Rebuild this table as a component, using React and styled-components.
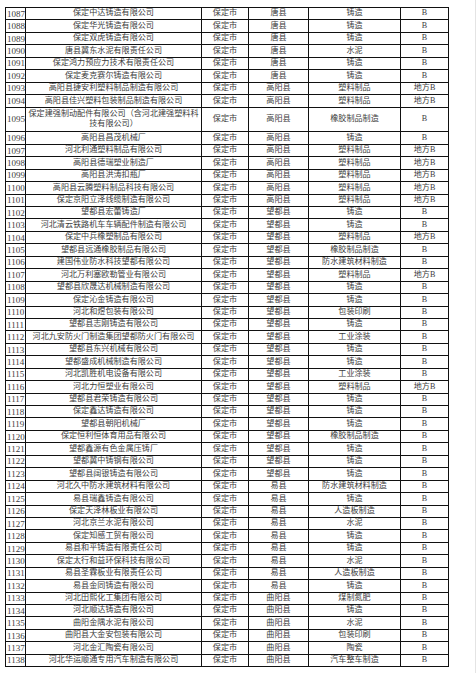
import React from "react";
import styled, { createGlobalStyle } from "styled-components";

const Global = createGlobalStyle`
  html, body { margin: 0; padding: 0; background: #fff; }
  body { font-family: "Liberation Serif", "Noto Sans CJK SC", serif; }
`;

const Page = styled.div`
  padding: 7px 0 0 5px;
  width: 476px;
  height: 673px;
  box-sizing: border-box;
  border-right: 1px solid #e4e4e4;
  overflow: hidden;
`;

const Table = styled.div`
  width: 444px;
  border-top: 1px solid #111;
  border-left: 1px solid #111;
  box-sizing: border-box;
`;

const Row = styled.div`
  display: grid;
  grid-template-columns: 20px 176px 47px 60px 92px 48px;
  height: ${(p) => (p.$double ? 24.9 : 12.45)}px;
  box-sizing: border-box;
`;

const Cell = styled.div`
  box-sizing: border-box;
  border-right: 1px solid #111;
  border-bottom: 1px solid #111;
  display: flex;
  align-items: center;
  justify-content: ${(p) => (p.$left ? "flex-start" : "center")};
  text-align: center;
  padding: ${(p) => (p.$left ? "0 0 0 1px" : "0 1px")};
  font-family: ${(p) =>
    p.$num ? '"Liberation Serif", serif' : '"Liberation Serif", "Noto Sans CJK SC", serif'};
  font-size: ${(p) => (p.$num ? "9px" : "8.1px")};
  line-height: ${(p) => (p.$num ? "10px" : "10.5px")};
  color: #3c3c3c;
  white-space: nowrap;
  overflow: hidden;
`;

const data = [
  [1087, "保定中达铸造有限公司", "唐县", "铸造", "B"],
  [1088, "保定华光铸造有限公司", "唐县", "铸造", "B"],
  [1089, "保定双虎铸造有限公司", "唐县", "铸造", "B"],
  [1090, "唐县冀东水泥有限责任公司", "唐县", "水泥", "B"],
  [1091, "保定鸿力预应力技术有限责任公司", "唐县", "铸造", "B"],
  [1092, "保定麦克赛尔铸造有限公司", "唐县", "铸造", "B"],
  [1093, "高阳县捷安利塑料制品制造有限公司", "高阳县", "塑料制品", "地方B"],
  [1094, "高阳县佳兴塑料包装制品制造有限公司", "高阳县", "塑料制品", "地方B"],
  [1095, ["保定建强制动配件有限公司（含河北建强塑料科", "技有限公司）"], "高阳县", "橡胶制品制造", "B"],
  [1096, "高阳县昌茂机械厂", "高阳县", "铸造", "B"],
  [1097, "河北利通塑料制品有限公司", "高阳县", "塑料制品", "地方B"],
  [1098, "高阳县德瑞塑业制造厂", "高阳县", "塑料制品", "地方B"],
  [1099, "高阳县洪涛扣瓶厂", "高阳县", "塑料制品", "地方B"],
  [1100, "高阳县云腾塑料制品科技有限公司", "高阳县", "塑料制品", "地方B"],
  [1101, "保定京阳立泽线缆制造有限公司", "高阳县", "塑料制品", "地方B"],
  [1102, "望都县宏蕾铸造厂", "望都县", "铸造", "B"],
  [1103, "河北清云铁路机车车辆配件制造有限公司", "望都县", "铸造", "B"],
  [1104, "保定中兵橡塑制品有限公司", "望都县", "塑料制品", "地方B"],
  [1105, "望都县远通橡胶制品有限公司", "望都县", "橡胶制品制造", "B"],
  [1106, "建国伟业防水科技望都有限公司", "望都县", "防水建筑材料制造", "B"],
  [1107, "河北万利塞欧勒管业有限公司", "望都县", "塑料制品", "地方B"],
  [1108, "望都县欣晟达机械制造有限公司", "望都县", "铸造", "B"],
  [1109, "保定沁金铸造有限公司", "望都县", "铸造", "B"],
  [1110, "河北和煜包装有限公司", "望都县", "包装印刷", "B"],
  [1111, "望都县志刚铸造有限公司", "望都县", "铸造", "B"],
  [1112, "河北九安防火门制造集团望都防火门有限公司", "望都县", "工业涂装", "B"],
  [1113, "望都县东兴机械有限公司", "望都县", "铸造", "B"],
  [1114, "望都盛成机械制造有限公司", "望都县", "铸造", "B"],
  [1115, "河北凯胜机电设备有限公司", "望都县", "工业涂装", "B"],
  [1116, "河北力恒塑业有限公司", "望都县", "塑料制品", "地方B"],
  [1117, "望都县君荣铸造有限公司", "望都县", "铸造", "B"],
  [1118, "保定鑫达铸造有限公司", "望都县", "铸造", "B"],
  [1119, "望都县朝阳机械厂", "望都县", "铸造", "B"],
  [1120, "保定恒利恒体育用品有限公司", "望都县", "橡胶制品制造", "B"],
  [1121, "望都鑫源有色金属压铸厂", "望都县", "铸造", "B"],
  [1122, "望都冀中铸钢有限公司", "望都县", "铸造", "B"],
  [1123, "望都县阔银铸造有限公司", "望都县", "铸造", "B"],
  [1124, "河北久中防水建筑材料有限公司", "易县", "防水建筑材料制造", "B"],
  [1125, "易县瑞鑫铸造有限公司", "易县", "铸造", "B"],
  [1126, "保定天泽林板业有限公司", "易县", "人造板制造", "B"],
  [1127, "河北京兰水泥有限公司", "易县", "水泥", "B"],
  [1128, "保定知感工贸有限公司", "易县", "铸造", "B"],
  [1129, "易县和平铸造有限责任公司", "易县", "铸造", "B"],
  [1130, "保定太行和益环保科技有限公司", "易县", "水泥", "B"],
  [1131, "易县圣霖板业有限责任公司", "易县", "人造板制造", "B"],
  [1132, "易县金同铸造有限公司", "易县", "铸造", "B"],
  [1133, "河北田熙化工集团有限公司", "曲阳县", "煤制氮肥", "B"],
  [1134, "河北顺达铸造有限公司", "曲阳县", "铸造", "B"],
  [1135, "曲阳金隅水泥有限公司", "曲阳县", "水泥", "B"],
  [1136, "曲阳县大金安包装有限公司", "曲阳县", "包装印刷", "B"],
  [1137, "河北金汇陶瓷有限公司", "曲阳县", "陶瓷", "B"],
  [1138, "河北华运顺通专用汽车制造有限公司", "曲阳县", "汽车整车制造", "B"],
];

const NameText = styled.span`
  display: block;
  text-align: center;
`;

export default function App() {
  return (
    <>
      <Global />
      <Page>
        <Table>
          {data.map(([no, name, county, type, level]) => {
            const double = Array.isArray(name);
            return (
              <Row key={no} $double={double}>
                <Cell $left $num>{no}</Cell>
                <Cell>
                  {double ? (
                    <NameText>
                      {name[0]}
                      <br />
                      {name[1]}
                    </NameText>
                  ) : (
                    name
                  )}
                </Cell>
                <Cell>保定市</Cell>
                <Cell>{county}</Cell>
                <Cell>{type}</Cell>
                <Cell>{level}</Cell>
              </Row>
            );
          })}
        </Table>
      </Page>
    </>
  );
}
